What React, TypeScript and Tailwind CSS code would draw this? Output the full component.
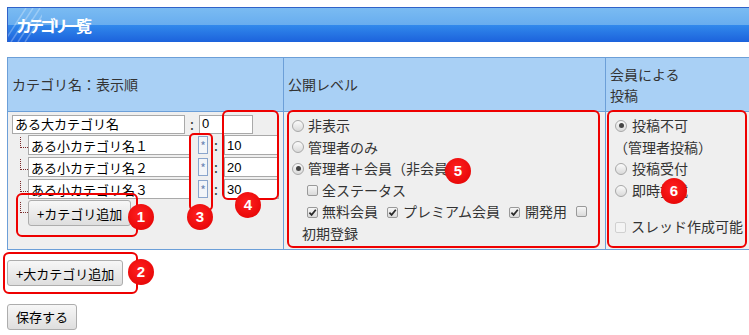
import React from "react";

const Radio = ({ checked = false }: { checked?: boolean }) => (
  <span className="inline-flex items-center justify-center w-[12px] h-[12px] rounded-full border border-[#a8a8a8] bg-[linear-gradient(#fbfbfb,#d9d9d9)] shrink-0">
    {checked && <span className="w-[5px] h-[5px] rounded-full bg-[#444]" />}
  </span>
);

const Check = ({ checked = false, disabled = false }: { checked?: boolean; disabled?: boolean }) => (
  <span
    className={
      disabled
        ? "inline-flex items-center justify-center w-[11px] h-[11px] rounded-[2px] border border-[#d0d0d0] bg-[#f4f4f4] shrink-0"
        : "inline-flex items-center justify-center w-[11px] h-[11px] rounded-[2px] border border-[#999] bg-[linear-gradient(#f6f6f6,#dadada)] shrink-0"
    }
  >
    {checked && (
      <svg width="9" height="9" viewBox="0 0 9 9">
        <path d="M1.4 4.6 L3.6 6.9 L7.8 1.8" fill="none" stroke="#2a2a2a" strokeWidth="1.7" />
      </svg>
    )}
  </span>
);

const Btn = ({ label }: { label: string }) => (
  <button className="h-[26px] px-[8px] rounded-[3px] border border-[#adadad] bg-[linear-gradient(#f7f7f7,#dedede)] text-[13px] text-black leading-none">
    {label}
  </button>
);

// tree connector in front of sub rows
const Branch = () => (
  <span className="ml-[8px] w-[8px] h-[11px] self-start mt-[2px] border-l border-b border-dotted border-[#7a2a2a] shrink-0" />
);

const SubRow = ({ name, order }: { name: string; order: string }) => (
  <div className="flex items-center h-[20px] mt-[2px]">
    <Branch />
    <input
      readOnly
      value={name}
      className="w-[162px] h-[20px] border border-[#a9a9a9] bg-white px-[2px] text-[13px] text-black outline-none"
    />
    <span className="ml-[8px] w-[10px] h-[18px] border border-[#8aa5cc] bg-[#f3f5f8] text-[12px] leading-[18px] text-center text-[#6a86b4]">
      *
    </span>
    <span className="w-[16px] text-center text-[14px] text-[#333]">:</span>
    <input
      readOnly
      value={order}
      className="w-[55px] h-[20px] border border-[#a9a9a9] bg-white px-[2px] text-[13px] text-black outline-none font-['Liberation_Sans',sans-serif]"
    />
  </div>
);

const Mark = ({ n, c }: { n: string; c: string }) => (
  <div
    className={`absolute w-[26px] h-[26px] rounded-full bg-[radial-gradient(circle_at_45%_40%,#ff2020,#e00000)] flex items-center justify-center text-white font-bold text-[15px] font-['Liberation_Sans',sans-serif] ${c}`}
  >
    {n}
  </div>
);

export default function App() {
  return (
    <div className="relative w-[749px] h-[335px] overflow-hidden bg-white text-[#333] font-['Noto_Sans_CJK_JP',sans-serif]">
      {/* title bar */}
      <div className="relative mt-[7px] ml-[7px] h-[35px] w-[760px] border-t border-l border-[#2f62c9] bg-[linear-gradient(#7abbf2_0%,#68adef_50%,#3189ec_50%,#1c62dc_100%)] flex items-center pl-[8px]">
        <svg className="absolute left-0 top-0" width="34" height="34" viewBox="0 0 34 34">
          {[0, 7, 14, 21].map((o) => (
            <line key={o} x1={o - 4} y1="34" x2={o + 18} y2="0" stroke="#ffffff" strokeOpacity="0.28" strokeWidth="1.5" />
          ))}
        </svg>
        <span className="relative text-white font-bold text-[16px] tracking-[-4px]">カテゴリ一覧</span>
      </div>

      {/* table */}
      <div className="mt-[15px] ml-[7px] w-[760px] grid grid-cols-[276px_322px_162px] border-t border-l border-[#6c9fd8] text-[14px]">
        <div className="h-[54px] bg-[#a9d0f5] border-r border-b border-[#6c9fd8] pl-[4px] flex items-center">
          カテゴリ名：表示順
        </div>
        <div className="h-[54px] bg-[#a9d0f5] border-r border-b border-[#6c9fd8] pl-[4px] flex items-center">
          公開レベル
        </div>
        <div className="h-[54px] bg-[#a9d0f5] border-r border-b border-[#6c9fd8] pl-[4px] flex items-center leading-[21px]">
          会員による
          <br />
          投稿
        </div>

        {/* column 1 */}
        <div className="bg-[#efefef] border-r border-b border-[#6c9fd8] pl-[4px] pt-[3px]">
          <div className="flex items-center h-[18px]">
            <input
              readOnly
              value="ある大カテゴリ名"
              className="w-[173px] h-[19px] border border-[#a9a9a9] bg-white px-[2px] text-[13px] text-black outline-none"
            />
            <span className="w-[14px] text-center text-[14px]">:</span>
            <input
              readOnly
              value="0"
              className="w-[54px] h-[19px] border border-[#a9a9a9] bg-white px-[2px] text-[13px] text-black outline-none font-['Liberation_Sans',sans-serif]"
            />
          </div>
          <SubRow name="ある小カテゴリ名１" order="10" />
          <SubRow name="ある小カテゴリ名２" order="20" />
          <SubRow name="ある小カテゴリ名３" order="30" />
          <div className="flex items-center mt-[1px]">
            <Branch />
            <Btn label="+カテゴリ追加" />
          </div>
        </div>

        {/* column 2 */}
        <div className="bg-[#efefef] border-r border-b border-[#6c9fd8] pl-[8px] pt-[3px] pb-[4px] leading-[21.6px]">
          <div className="flex items-center">
            <Radio />
            <span className="ml-[4px]">非表示</span>
          </div>
          <div className="flex items-center">
            <Radio />
            <span className="ml-[4px]">管理者のみ</span>
          </div>
          <div className="flex items-center">
            <Radio checked />
            <span className="ml-[4px]">管理者＋会員（非会員）</span>
          </div>
          <div className="flex items-center pl-[15px]">
            <Check />
            <span className="ml-[4px]">全ステータス</span>
          </div>
          <div className="flex items-center pl-[15px]">
            <Check checked />
            <span className="ml-[4px]">無料会員</span>
            <span className="ml-[9px]">
              <Check checked />
            </span>
            <span className="ml-[5px]">プレミアム会員</span>
            <span className="ml-[9px]">
              <Check checked />
            </span>
            <span className="ml-[5px]">開発用</span>
            <span className="ml-[9px]">
              <Check />
            </span>
          </div>
          <div className="pl-[10px]">初期登録</div>
        </div>

        {/* column 3 */}
        <div className="bg-[#efefef] border-r border-b border-[#6c9fd8] pl-[9px] pt-[3px] leading-[21.6px]">
          <div className="flex items-center">
            <Radio checked />
            <span className="ml-[5px]">投稿不可</span>
          </div>
          <div className="-ml-[1px]">（管理者投稿）</div>
          <div className="flex items-center">
            <Radio />
            <span className="ml-[5px]">投稿受付</span>
          </div>
          <div className="flex items-center">
            <Radio />
            <span className="ml-[5px]">即時掲載</span>
          </div>
          <div className="flex items-center mt-[15px]">
            <Check disabled />
            <span className="ml-[5px]">スレッド作成可能</span>
          </div>
        </div>
      </div>

      <div className="ml-[7px] mt-[10px]">
        <Btn label="+大カテゴリ追加" />
      </div>
      <div className="ml-[7px] mt-[17px]">
        <Btn label="保存する" />
      </div>

      {/* annotations */}
      <div className="absolute left-[16px] top-[193px] w-[122px] h-[44px] rounded-[6px] border-2 border-[#ee0000]" />
      <div className="absolute left-[3px] top-[252px] w-[135px] h-[42px] rounded-[6px] border-2 border-[#ee0000]" />
      <div className="absolute left-[189px] top-[133px] w-[24px] h-[78px] rounded-[5px] border-2 border-[#ee0000]" />
      <div className="absolute left-[222px] top-[110px] w-[57px] h-[90px] rounded-[6px] border-2 border-[#ee0000]" />
      <div className="absolute left-[287px] top-[110px] w-[313px] h-[138px] rounded-[6px] border-2 border-[#ee0000]" />
      <div className="absolute left-[607px] top-[110px] w-[140px] h-[138px] rounded-[6px] border-2 border-[#ee0000]" />
      <Mark n="1" c="left-[128px] top-[204px]" />
      <Mark n="2" c="left-[128px] top-[259px]" />
      <Mark n="3" c="left-[187px] top-[204px]" />
      <Mark n="4" c="left-[235px] top-[192px]" />
      <Mark n="5" c="left-[445px] top-[158px]" />
      <Mark n="6" c="left-[661px] top-[178px]" />
    </div>
  );
}
